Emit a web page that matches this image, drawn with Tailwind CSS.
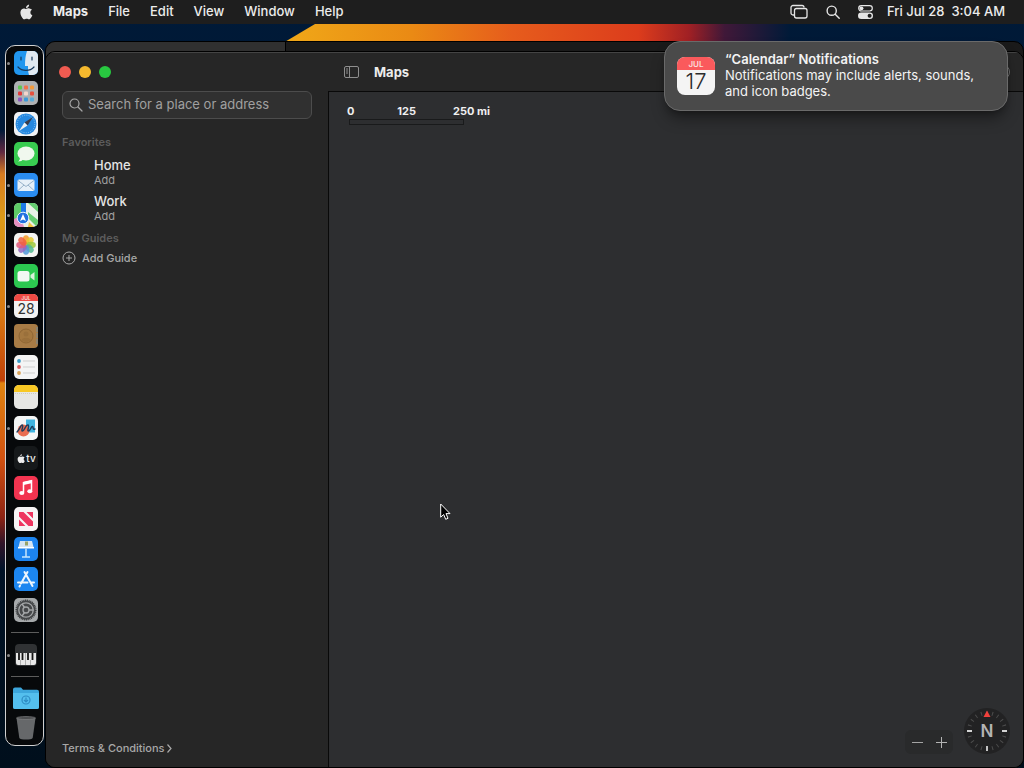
<!DOCTYPE html>
<html lang="en">
<head>
    <meta charset="UTF-8">
    <meta name="viewport" content="width=device-width, initial-scale=1.0">
    <title>Maps</title>
    <script src="https://cdn.jsdelivr.net/npm/@tailwindcss/browser@4"></script>
</head>
<body class="relative flex flex-col h-screen overflow-hidden bg-[#001226] font-['Inter','Liberation_Sans',sans-serif] text-[13px] text-white select-none">
    <!-- Wallpaper -->
    <svg class="absolute inset-0 w-full h-full" viewBox="0 0 1024 768" preserveAspectRatio="none" aria-hidden="true">
        <defs>
            <linearGradient id="sky" x1="0" y1="0" x2="0" y2="1">
                <stop offset="0" stop-color="#001a38"/><stop offset="0.6" stop-color="#00132a"/><stop offset="1" stop-color="#000f1c"/>
            </linearGradient>
            <linearGradient id="ray" x1="285" x2="790" y1="0" y2="0" gradientUnits="userSpaceOnUse">
                <stop offset="0" stop-color="#f0a818"/><stop offset="0.25" stop-color="#ea8a14"/><stop offset="0.45" stop-color="#e65c1c"/><stop offset="0.7" stop-color="#dc3c1c"/><stop offset="0.8" stop-color="#a02024"/><stop offset="0.87" stop-color="#401838"/><stop offset="1" stop-color="#001a38"/>
            </linearGradient>
            <linearGradient id="side" x1="0" x2="0" y1="130" y2="570" gradientUnits="userSpaceOnUse">
                <stop offset="0" stop-color="#001a38"/><stop offset="0.05" stop-color="#602840"/><stop offset="0.1" stop-color="#d87c20"/><stop offset="0.2" stop-color="#dc9a18"/><stop offset="0.42" stop-color="#d87812"/><stop offset="0.57" stop-color="#c04008"/><stop offset="0.575" stop-color="#e08410"/><stop offset="0.75" stop-color="#d05010"/><stop offset="0.88" stop-color="#8c2414"/><stop offset="0.94" stop-color="#301428"/><stop offset="1" stop-color="#00132a"/>
            </linearGradient>
        </defs>
        <rect width="1024" height="768" fill="url(#sky)"/>
        <rect y="130" width="10" height="440" fill="url(#side)"/>
        <path d="M283 43 315 24H790V43Z" fill="url(#ray)"/>
    </svg>

    <!-- Menu bar -->
    <header class="relative flex items-center justify-between h-6 shrink-0 pl-5 pr-[19px] bg-[#1e1e1e] font-medium text-[#ececec]">
        <nav class="flex items-center gap-5">
            <button aria-label="Apple menu" class="w-[13px]">
                <svg class="w-[13px] h-4" viewBox="0 0 14 17" fill="#e6e6e6"><path d="M9.8 0.5c.1 1-.3 2-.9 2.700-.6.8-1.500 1.300-2.400 1.200-.1-1 .3-1.900.9-2.600C8 1.100 9 .6 9.800.5zM12.900 6.200c-1.100.7-1.700 1.600-1.700 2.800 0 1.400.8 2.500 2.100 3-.3 1-.8 1.900-1.400 2.700-.6.9-1.200 1.700-2.200 1.700s-1.300-.6-2.500-.6-1.600.6-2.500.6c-1 0-1.700-.9-2.300-1.800C.7 12.200 0 9.600.7 7.400 1.200 5.700 2.600 4.600 4.100 4.600c1 0 1.900.7 2.600.7.600 0 1.700-.8 3-.7 1.300 0 2.500.6 3.200 1.600z"/></svg>
            </button>
            <button class="font-bold">Maps</button>
            <button>File</button>
            <button>Edit</button>
            <button>View</button>
            <button>Window</button>
            <button>Help</button>
        </nav>
        <div class="flex items-center gap-[18px]">
            <button aria-label="Stage Manager">
                <svg class="w-[18px] h-4" viewBox="0 0 18 16" fill="none" stroke="#e6e6e6" stroke-width="1.300"><path d="M4.500 11H3a2 2 0 0 1-2-2V3.500a2 2 0 0 1 2-2h9a2 2 0 0 1 2 2"/><rect x="4.500" y="4.500" width="12.500" height="9.500" rx="2"/></svg>
            </button>
            <button aria-label="Spotlight">
                <svg class="size-[14px]" viewBox="0 0 14 14" fill="none" stroke="#e6e6e6" stroke-width="1.400" stroke-linecap="round"><circle cx="5.700" cy="5.700" r="4.600"/><path d="m9.200 9.200 4 4"/></svg>
            </button>
            <button aria-label="Control Center">
                <svg class="w-[15px] h-[14px]" viewBox="0 0 15 14"><rect x="0.700" y="0.700" width="13.600" height="5.300" rx="2.650" fill="none" stroke="#e6e6e6" stroke-width="1.200"/><circle cx="3.500" cy="3.350" r="1.900" fill="#e6e6e6"/><rect y="7.500" width="15" height="6.500" rx="3.250" fill="#e6e6e6"/><circle cx="11.600" cy="10.750" r="2" fill="#1e1e1e"/></svg>
            </button>
            <time class="-ml-1 whitespace-pre">Fri Jul 28  3:04 AM</time>
        </div>
    </header>

    <!-- Background window -->
    <div class="absolute top-[41px] bottom-0 left-[45px] right-0 flex rounded-[10px] overflow-hidden border border-black bg-[#1a1a1a]">
        <div class="w-[240px] bg-[#303030] border-r border-black"></div>
    </div>

    <!-- Maps window -->
    <main class="absolute top-[51px] bottom-0 left-[45px] right-0 flex rounded-[10px] overflow-hidden border border-black bg-[#262626]">
        <aside class="flex flex-col w-[282px] shrink-0 px-4 pt-[13px] pb-3 border-t border-t-[#444444] bg-[#262626]">
            <div class="flex gap-2 -ml-[3px]">
                <button aria-label="Close" class="size-3 rounded-full bg-[#f05b51]"></button>
                <button aria-label="Minimize" class="size-3 rounded-full bg-[#f5b92e]"></button>
                <button aria-label="Zoom" class="size-3 rounded-full bg-[#28c840]"></button>
            </div>
            <label class="flex items-center gap-[5px] h-7 mt-[13px] px-[6px] rounded-md border border-[#4c4c4c] bg-[#303030]">
                <svg class="size-[14px] shrink-0" viewBox="0 0 14 14" fill="none" stroke="#a6a6a6" stroke-width="1.200" stroke-linecap="round"><circle cx="5.500" cy="5.500" r="4.500"/><path d="m9 9 4 4"/></svg>
                <input type="text" aria-label="Search" placeholder="Search for a place or address" class="w-full bg-transparent outline-none placeholder:text-[#a0a0a0]">
            </label>
            <h2 class="mt-4 text-[11px] leading-[14px] font-semibold text-[#5c5c5c]">Favorites</h2>
            <ul class="pl-8 mt-2">
                <li class="h-9"><button class="block text-left"><span class="block leading-4 font-medium text-[#e4e4e4]">Home</span><span class="block text-[11px] leading-[14px] text-[#a0a0a0]">Add</span></button></li>
                <li class="h-9"><button class="block text-left"><span class="block leading-4 font-medium text-[#e4e4e4]">Work</span><span class="block text-[11px] leading-[14px] text-[#a0a0a0]">Add</span></button></li>
            </ul>
            <h2 class="mt-[2px] text-[11px] leading-[14px] font-semibold text-[#5c5c5c]">My Guides</h2>
            <button class="flex items-center gap-[6px] mt-[5px] text-[11px] leading-4 font-medium text-[#a8a8a8]">
                <svg class="size-[14px]" viewBox="0 0 14 14" fill="none" stroke="#a8a8a8"><circle cx="7" cy="7" r="6"/><path d="M7 4v6M4 7h6"/></svg>
                Add Guide
            </button>
            <a href="#" class="flex items-center gap-[2px] mt-auto text-[11px] leading-[14px] font-medium text-[#a8a8a8]">Terms &amp; Conditions
                <svg class="w-[5px] h-[9px]" viewBox="0 0 5 9" fill="none" stroke="#a8a8a8" stroke-width="1.200"><path d="m0.500 0.500 3.500 4-3.500 4"/></svg>
            </a>
        </aside>
        <section class="flex flex-col flex-1 min-w-0">
            <div class="flex items-center gap-[15px] h-[39px] shrink-0 px-4 border-t border-t-[#444444] bg-[#262626]">
                <button aria-label="Toggle sidebar">
                    <svg class="w-[15px] h-3" viewBox="0 0 15 12" fill="none" stroke="#8e8e8e"><rect x="0.500" y="0.500" width="14" height="11" rx="1.500"/><path d="M5.500 0.500v11M2 3h2M2 5h2M2 7h2"/></svg>
                </button>
                <h1 class="pt-px font-bold text-[#ececec]">Maps</h1>
                <button aria-label="Account" class="size-4 ml-auto -mr-[3px] rounded-full border border-[#707070]"></button>
            </div>
            <div class="relative flex flex-col justify-between flex-1 border-t border-l border-[#090909] bg-[#2d2e30]">
                <div class="pt-3 pl-[18px]">
                    <div class="flex w-[143px] justify-between text-[11px] leading-[14px] font-bold text-[#f0f0f0]">
                        <span>0</span><span class="pl-[6px]">125</span><span>250 mi</span>
                    </div>
                    <div class="w-[115px] h-[6px] mt-px ml-[2px] border border-[#191a1b]"></div>
                </div>
                <div class="flex items-end justify-end gap-[11px] pr-[13px] pb-[13px]">
                    <div class="flex items-center justify-center gap-[13px] w-12 h-6 rounded-md bg-[#292a2b]">
                        <button aria-label="Zoom out"><svg class="size-[11px]" viewBox="0 0 11 11" stroke="#a4a4a4"><path d="M0 5.500h11"/></svg></button>
                        <button aria-label="Zoom in"><svg class="size-[11px]" viewBox="0 0 11 11" stroke="#b4b4b4"><path d="M0 5.500h11M5.500 0v11"/></svg></button>
                    </div>
                    <button aria-label="Compass" class="size-[46px] rounded-full bg-[#222223]">
                        <svg viewBox="0 0 46 46">
                            <circle cx="23" cy="23" r="18" fill="none" stroke="#4c4c4c" stroke-width="4" pathLength="240" stroke-dasharray="2 10" stroke-dashoffset="1"/>
                            <path d="M23 38v5M3 23h5M38 23h5" stroke="#d4d4d4" stroke-width="1.800"/>
                            <path d="M23 2.500 26.500 9h-7z" fill="#f0413c"/>
                            <text x="23" y="29" text-anchor="middle" font-size="17" font-weight="600" fill="#b4b4b4">N</text>
                        </svg>
                    </button>
                </div>
            </div>
        </section>
    </main>

    <!-- Dock -->
    <nav aria-label="Dock" class="absolute top-[45px] bottom-[22px] left-[5px] flex flex-col items-center w-[39px] pt-[5px] pb-[5px] rounded-[10px] border border-[#d0d0d0] bg-[#07090b]">
        <ul class="flex flex-col justify-between flex-1">
            <li class="relative size-6 ml-[2px]">
                <i class="absolute -left-[7px] top-[11px] size-[3px] rounded-full bg-[#8a8a8a]"></i>
                <button aria-label="Finder" class="block"><svg class="size-6" viewBox="0 0 24 24"><rect width="24" height="24" rx="5" fill="#2196ee"/><path d="M13 0h6a5 5 0 0 1 5 5v14a5 5 0 0 1-5 5h-4c-1-3-1-6-1-9h-3c0-6 .5-11 2-15z" fill="#dfe8f0"/><path d="M7 6v3M18 6v3M4 16c4 4.500 12 4.500 16 0" fill="none" stroke="#16375a" stroke-width="1.200" stroke-linecap="round"/></svg></button>
            </li>
            <li class="relative size-6 ml-[2px]">
                <button aria-label="Launchpad" class="block"><svg class="size-6" viewBox="0 0 24 24"><rect width="24" height="24" rx="5" fill="#aeb0b2"/><g><rect x="4" y="4.500" width="4" height="4" rx="1" fill="#5cc850"/><rect x="10" y="4.500" width="4" height="4" rx="1" fill="#f2704a"/><rect x="16" y="4.500" width="4" height="4" rx="1" fill="#f49a3c"/><rect x="4" y="10.500" width="4" height="4" rx="1" fill="#e23838"/><rect x="10" y="10.500" width="4" height="4" rx="1" fill="#f3d6cc"/><rect x="16" y="10.500" width="4" height="4" rx="1" fill="#e8503e"/><rect x="4" y="16.500" width="4" height="4" rx="1" fill="#8c58c0"/><rect x="10" y="16.500" width="4" height="4" rx="1" fill="#3c9ad8"/><rect x="16" y="16.500" width="4" height="4" rx="1" fill="#58acd8"/></g></svg></button>
            </li>
            <li class="relative size-6 ml-[2px]">
                <button aria-label="Safari" class="block"><svg class="size-6" viewBox="0 0 24 24"><rect width="24" height="24" rx="5" fill="#f0f2f4"/><circle cx="12" cy="12" r="10.500" fill="#2588e0"/><circle cx="12" cy="12" r="8.800" fill="none" stroke="#a8d4f8" stroke-width="1" stroke-dasharray=".7 1.500"/><path d="m19 5-5.500 8.500-3-3z" fill="#3c3c48"/><path d="m5 19 5.500-8.500 3 3z" fill="#f0f0f0"/></svg></button>
            </li>
            <li class="relative size-6 ml-[2px]">
                <button aria-label="Messages" class="block"><svg class="size-6" viewBox="0 0 24 24"><rect width="24" height="24" rx="5" fill="#38cc50"/><ellipse cx="12" cy="11.500" rx="8.500" ry="7" fill="#f0f8ee"/><path d="M6 15c0 2-.5 3.500-2 4.500 2.500 0 4.500-.8 5.500-2.500z" fill="#f0f8ee"/></svg></button>
            </li>
            <li class="relative size-6 ml-[2px]">
                <i class="absolute -left-[7px] top-[11px] size-[3px] rounded-full bg-[#8a8a8a]"></i>
                <button aria-label="Mail" class="block"><svg class="size-6" viewBox="0 0 24 24"><rect width="24" height="24" rx="5" fill="#2a8cf0"/><rect x="3.500" y="6.500" width="17" height="11.500" rx="1.500" fill="#e6f0f8"/><path d="m4 7.500 8 6 8-6M4 17.500l6-5.500M20 17.500 14 12" fill="none" stroke="#8fabc4" stroke-width="0.900"/></svg></button>
            </li>
            <li class="relative size-6 ml-[2px]">
                <i class="absolute -left-[7px] top-[11px] size-[3px] rounded-full bg-[#8a8a8a]"></i>
                <button aria-label="Maps" class="block"><svg class="size-6" viewBox="0 0 24 24"><rect width="24" height="24" rx="5" fill="#e8f0e6"/><path d="M5 0h2v14L0 20V5a5 5 0 0 1 5-5z" fill="#5ecb68"/><path d="M14 0h5a5 5 0 0 1 5 5v4z" fill="#64cc70"/><path d="m14 9 10 8v2a5 5 0 0 1-2 4L14 15z" fill="#64cc70"/><path d="m0 16 7-3 3 11H5a5 5 0 0 1-5-5z" fill="#e68ec0"/><path d="m15 19 5 5h-6z" fill="#f0c040"/><path d="M7 0h5v11H7z" fill="#1c7ae8"/><circle cx="9" cy="15" r="5.800" fill="#2272e0" stroke="#e4f0fc" stroke-width="1"/><path d="m9 11 3 7-3-1.500L6 18z" fill="#fff"/></svg></button>
            </li>
            <li class="relative size-6 ml-[2px]">
                <button aria-label="Photos" class="block"><svg class="size-6" viewBox="0 0 24 24"><rect width="24" height="24" rx="5" fill="#f4f4f2"/><g fill-opacity="0.850"><ellipse cx="12" cy="7" rx="3.300" ry="4.800" fill="#f69a28"/><ellipse cx="12" cy="7" rx="3.300" ry="4.800" fill="#e4ca30" transform="rotate(45 12 12)"/><ellipse cx="12" cy="7" rx="3.300" ry="4.800" fill="#9cc83c" transform="rotate(90 12 12)"/><ellipse cx="12" cy="7" rx="3.300" ry="4.800" fill="#52b890" transform="rotate(135 12 12)"/><ellipse cx="12" cy="7" rx="3.300" ry="4.800" fill="#5498d8" transform="rotate(180 12 12)"/><ellipse cx="12" cy="7" rx="3.300" ry="4.800" fill="#9468c0" transform="rotate(225 12 12)"/><ellipse cx="12" cy="7" rx="3.300" ry="4.800" fill="#e0587c" transform="rotate(270 12 12)"/><ellipse cx="12" cy="7" rx="3.300" ry="4.800" fill="#f06040" transform="rotate(315 12 12)"/></g></svg></button>
            </li>
            <li class="relative size-6 ml-[2px]">
                <button aria-label="FaceTime" class="block"><svg class="size-6" viewBox="0 0 24 24"><rect width="24" height="24" rx="5" fill="#2cc850"/><rect x="3.500" y="7" width="12" height="10.500" rx="2.500" fill="#f2f8f2"/><path d="m16.500 11 4-3v8.500l-4-3z" fill="#d8f0da"/></svg></button>
            </li>
            <li class="relative size-6 ml-[2px]">
                <i class="absolute -left-[7px] top-[11px] size-[3px] rounded-full bg-[#8a8a8a]"></i>
                <button aria-label="Calendar" class="block"><svg class="size-6" viewBox="0 0 24 24"><rect width="24" height="24" rx="5" fill="#f2f2f2"/><path d="M0 7V5a5 5 0 0 1 5-5h14a5 5 0 0 1 5 5v2z" fill="#ee4a44"/><text x="12" y="6" text-anchor="middle" font-size="5" font-weight="600" fill="#fbd8d6">JUL</text><text x="12" y="20" text-anchor="middle" font-size="14" fill="#333">28</text></svg></button>
            </li>
            <li class="relative size-6 ml-[2px]">
                <button aria-label="Contacts" class="block"><svg class="size-6" viewBox="0 0 24 24"><rect width="24" height="24" rx="4" fill="#a87c46"/><path d="M22 3h2v5h-2zM22 9h2v5h-2zM22 15h2v5h-2z" fill="#8a8270"/><circle cx="12" cy="12" r="7" fill="#a47840" stroke="#8e6634"/><circle cx="12" cy="10" r="2.500" fill="#9a703b"/><path d="M7.500 16c1-3 8-3 9 0-2 2.500-7 2.500-9 0z" fill="#9a703b"/></svg></button>
            </li>
            <li class="relative size-6 ml-[2px]">
                <button aria-label="Reminders" class="block"><svg class="size-6" viewBox="0 0 24 24"><rect width="24" height="24" rx="5" fill="#f4f4f4"/><circle cx="5" cy="6" r="1.900" fill="#3a9cc8"/><circle cx="5" cy="12" r="1.900" fill="#dc5c5c"/><circle cx="5" cy="18" r="1.900" fill="#dca458"/><path d="M9 6h12M9 12h12M9 18h12" stroke="#cfcfcf"/></svg></button>
            </li>
            <li class="relative size-6 ml-[2px]">
                <button aria-label="Notes" class="block"><svg class="size-6" viewBox="0 0 24 24"><rect width="24" height="24" rx="5" fill="#e6e6e4"/><path d="M0 7V5a5 5 0 0 1 5-5h14a5 5 0 0 1 5 5v2z" fill="#f8c824"/><path d="M1 8.500h22" stroke="#d0ccbc" stroke-dasharray="1 1"/></svg></button>
            </li>
            <li class="relative size-6 ml-[2px]">
                <i class="absolute -left-[7px] top-[11px] size-[3px] rounded-full bg-[#8a8a8a]"></i>
                <button aria-label="Freeform" class="block"><svg class="size-6" viewBox="0 0 24 24"><rect width="24" height="24" rx="5" fill="#f4f6f6"/><path d="M12 3.500h9v13h-9z" fill="#40b4e0"/><circle cx="9.500" cy="14.500" r="6" fill="#e86c50"/><path d="M3 16c2-1 4-8 5.500-7s-2 6 0 6 3.500-7 5.500-6-1.500 6 .5 6 2.500-5 4-4.500-.5 3.500 2.500 2.500" fill="none" stroke="#1c3c5c" stroke-width="1.400" stroke-linecap="round"/></svg></button>
            </li>
            <li class="relative size-6 ml-[2px]">
                <button aria-label="TV" class="block"><svg class="size-6" viewBox="0 0 24 24"><rect width="24" height="24" rx="5" fill="#16191b"/><path d="M8 8.300c.1 1.200-.8 2-1.800 2 0-1.200.8-1.900 1.800-2zM10.600 11.600c-1.300.8-1.200 2.700.2 3.400-.6 1.500-1.400 2.400-2.500 1.900-.6-.3-1-.3-1.600 0-2.200.8-4.300-4.300-2.200-6 1-.7 1.700-.3 2.600 0 1.300-.5 2.500-.4 3.500.7z" fill="#eee"/><text x="17" y="16" text-anchor="middle" font-size="10" font-weight="500" fill="#eee">tv</text></svg></button>
            </li>
            <li class="relative size-6 ml-[2px]">
                <button aria-label="Music" class="block"><svg class="size-6" viewBox="0 0 24 24"><rect width="24" height="24" rx="5" fill="#f23450"/><path d="M9.500 16.500V6.500l8-1.800v10" fill="none" stroke="#fff" stroke-width="1.500"/><path d="m9.500 6 8-1.800v3L9.500 9z" fill="#fff"/><ellipse cx="7.800" cy="17" rx="2.500" ry="2" fill="#fff"/><ellipse cx="15.800" cy="15.200" rx="2.500" ry="2" fill="#fff"/></svg></button>
            </li>
            <li class="relative size-6 ml-[2px]">
                <button aria-label="News" class="block"><svg class="size-6" viewBox="0 0 24 24"><rect width="24" height="24" rx="5" fill="#f6f4f5"/><path d="M5 5h4.500L19 14.500V19h-4.500L5 9.500zM5 12.500 11.500 19H5zM12.500 5H19v6.500z" fill="#ee3560"/></svg></button>
            </li>
            <li class="relative size-6 ml-[2px]">
                <button aria-label="Keynote" class="block"><svg class="size-6" viewBox="0 0 24 24"><rect width="24" height="24" rx="5" fill="#1c84f0"/><path d="M6 4h12l1.500 6h-15z" fill="#d4e4f2"/><path d="M11 4.500h3v4h-3z" fill="#98a468"/><path d="M4 10h16v1.500H4z" fill="#fff"/><path d="M12 11.500V20M8 20h8" stroke="#c4e4fc" stroke-width="1.500"/></svg></button>
            </li>
            <li class="relative size-6 ml-[2px]">
                <button aria-label="App Store" class="block"><svg class="size-6" viewBox="0 0 24 24"><rect width="24" height="24" rx="5" fill="#1c86f0"/><path d="m13.500 5-6.500 11.500M10.500 5 18.500 19M4 15.500h9.500M17 15.500h3M6 18.500l-.5 1" stroke="#eef6fc" stroke-width="2" stroke-linecap="round"/></svg></button>
            </li>
            <li class="relative size-6 ml-[2px]">
                <button aria-label="System Settings" class="block"><svg class="size-6" viewBox="0 0 24 24"><rect width="24" height="24" rx="5" fill="#a6a9ab"/><circle cx="12" cy="12" r="9.500" fill="#454749"/><circle cx="12" cy="12" r="9.800" fill="none" stroke="#36383a" stroke-width="1.400" stroke-dasharray="1 0.800"/><circle cx="12" cy="12" r="7.200" fill="none" stroke="#a4a6a8" stroke-width="1.300"/><circle cx="12" cy="12" r="3" fill="none" stroke="#a4a6a8" stroke-width="1.300"/><path d="M15 12h4.500M10.500 9.500 8 5.800M10.500 14.500 8 18.200" stroke="#a4a6a8" stroke-width="1.500"/></svg></button>
            </li>
        </ul>
        <hr class="w-7 mt-[10px] border-[#5c5c5c]">
        <div class="relative size-6 mt-[10px] ml-[2px] shrink-0">
            <i class="absolute -left-[7px] top-[11px] size-[3px] rounded-full bg-[#8a8a8a]"></i>
            <button aria-label="Piano" class="block"><svg class="size-6" viewBox="0 0 24 24"><rect x="1" y="1" width="22" height="22" rx="4" fill="#303234"/><path d="M2 10h20v10a2 2 0 0 1-2 2H4a2 2 0 0 1-2-2z" fill="#e8e8e8"/><path d="M5 10v7M8.500 10v7M14 10v7M18.500 10v7" stroke="#141414" stroke-width="1.800"/><path d="M6.500 17v5M11.500 10v12M16.500 17v5" stroke="#888" stroke-width="0.600"/></svg></button>
        </div>
        <hr class="w-7 mt-[9px] border-[#5c5c5c]">
        <button aria-label="Downloads" class="mt-[10px] ml-[2px]"><svg class="w-[26px] h-[22px]" viewBox="0 0 26 22"><path d="M0 2.500A2 2 0 0 1 2 .5h6l2 2.300h14a2 2 0 0 1 2 2V20a2 2 0 0 1-2 2H2a2 2 0 0 1-2-2z" fill="#3ca6dc"/><path d="M0 6h26v14a2 2 0 0 1-2 2H2a2 2 0 0 1-2-2z" fill="#54bfee"/><circle cx="13" cy="13" r="4" fill="none" stroke="#2e8cc4" stroke-width="1.200"/><path d="M13 10.500v4M11 13l2 2 2-2" fill="none" stroke="#2e8cc4" stroke-width="1.200"/></svg></button>
        <button aria-label="Trash" class="mt-[7px] ml-[2px]"><svg class="w-5 h-6" viewBox="0 0 20 24"><path d="M0.500 2h19l-2.800 20c-1 2-12.400 2-13.400 0z" fill="#66686a"/><ellipse cx="10" cy="2" rx="9.500" ry="1.500" fill="#4c4e50" stroke="#86888a" stroke-width="0.600"/></svg></button>
    </nav>

    <!-- Notification banner -->
    <aside role="alert" class="absolute top-[41px] right-4 flex items-center gap-[10px] w-[344px] h-[70px] px-3 rounded-2xl border border-[#6a6a6a] bg-[#4a4a4a] shadow-lg shadow-black/40">
        <svg class="size-[38px] shrink-0" viewBox="0 0 38 38"><rect width="38" height="38" rx="8" fill="#f4f4f4"/><path d="M0 13V8a8 8 0 0 1 8-8h22a8 8 0 0 1 8 8v5z" fill="#fa5a5c"/><text x="19" y="10" text-anchor="middle" font-size="8" font-weight="600" fill="#fbdcda">JUL</text><text x="19" y="31.500" text-anchor="middle" font-size="22" font-weight="300" fill="#2c2c2c">17</text></svg>
        <div class="pb-[2px] leading-4 text-[#f4f4f4]">
            <p class="font-semibold">“Calendar” Notifications</p>
            <p>Notifications may include alerts, sounds, and icon badges.</p>
        </div>
    </aside>

    <!-- Pointer -->
    <svg class="absolute left-[440px] top-[503px] w-3 h-[18px] pointer-events-none" viewBox="0 0 12 18"><path d="M.7 1v13.200l3-2.700 2 4.800 2.300-1-2-4.700h4z" fill="#000" stroke="#fff"/></svg>
</body>
</html>
